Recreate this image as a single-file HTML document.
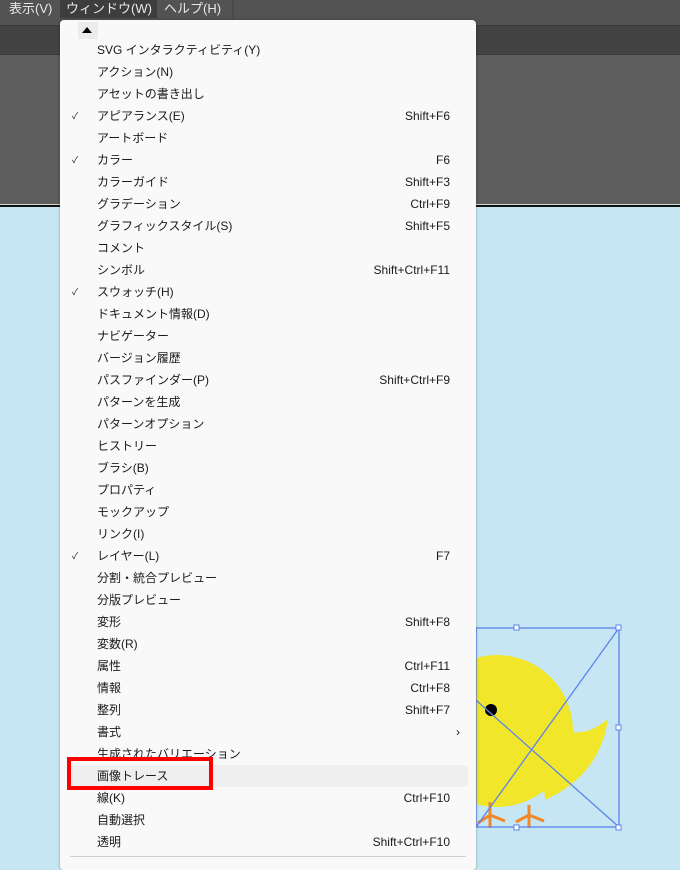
<!DOCTYPE html>
<html><head><meta charset="utf-8"><style>
*{margin:0;padding:0;box-sizing:border-box}
body{width:680px;height:864px;overflow:hidden;position:relative;background:#c5e6f2;font-family:"Liberation Sans","Noto Sans CJK JP",sans-serif;}
.bar{position:absolute;left:0;top:0;width:680px;height:25px;background:#535353;}
.bar span{position:absolute;top:0;font-size:13px;color:#e8e8e8;line-height:17px}
.tb{position:absolute;left:0;top:25px;width:680px;height:30px;background:#434343;border-top:1px solid #3a3a3a;border-bottom:1px solid #3a3a3a}
.ws{position:absolute;left:0;top:55px;width:680px;height:149px;background:#5e5e5e}
.ln{position:absolute;left:0;top:204px;width:680px;height:1px;background:#cfd8cf}
.ln2{position:absolute;left:0;top:205px;width:680px;height:2px;background:#111}
.menu{position:absolute;left:60px;top:20px;width:416px;height:850px;background:#f9f9f9;border-radius:4px;box-shadow:0 0 3px rgba(0,0,0,.3)}
.r{position:absolute;left:0;width:416px;height:22px;font-size:12px;color:#1a1a1a;line-height:22px;margin-top:2px}
.r .t{position:absolute;left:37px}
.r .k{position:absolute;right:26px}
.r .c{position:absolute;left:12px;font-size:9px}
</style></head><body>
<div class="bar"><span style="left:9px">表示(V)</span><div style="position:absolute;left:60px;top:0;width:97px;height:18px;background:#3d3d3d"></div><span style="left:66px">ウィンドウ(W)</span><span style="left:164px">ヘルプ(H)</span><div style="position:absolute;left:232px;top:0;width:2px;height:18px;background:#4a4a4a"></div></div>
<div class="tb"></div><div class="ws"></div><div class="ln"></div><div class="ln2"></div>
<svg style="position:absolute;left:0;top:0" width="680" height="864">
<circle cx="497" cy="731" r="76" fill="#f2e62a"/>
<path d="M565 730 Q585 738 608 719 Q600 775 545 800 L540 740 Z" fill="#f2e62a"/>
<circle cx="491" cy="710" r="6" fill="#000"/>
<g stroke="#f0882a" stroke-width="3" fill="none"><path d="M490 802V828M478 823L490 815L505 821M529 805V828M516 822L529 815L544 821"/></g>
<g stroke="#5b84ee" stroke-width="1.3" fill="none"><rect x="476" y="628" width="143" height="199"/><path d="M476 827L619 628M460 686L619 827"/></g>
<g fill="#fff" stroke="#5b84ee"><rect x="514" y="625" width="5" height="5"/><rect x="616" y="625" width="5" height="5"/><rect x="616" y="725" width="5" height="5"/><rect x="514" y="825" width="5" height="5"/><rect x="616" y="825" width="5" height="5"/></g>
</svg>
<div class="menu">
<div style="position:absolute;left:18px;top:2px;width:20px;height:17px;background:#ececec"></div>
<div style="position:absolute;left:22px;top:7px;width:0;height:0;border-left:5px solid transparent;border-right:5px solid transparent;border-bottom:6px solid #000"></div>
<div style="position:absolute;left:7px;top:745px;width:401px;height:22px;background:#efefef;border-radius:4px"></div>
<div style="position:absolute;left:10px;top:836px;width:396px;height:1px;background:#d0d0d0"></div>
<div class="r" style="top:17px"><span class="t">SVG インタラクティビティ(Y)</span></div>
<div class="r" style="top:39px"><span class="t">アクション(N)</span></div>
<div class="r" style="top:61px"><span class="t">アセットの書き出し</span></div>
<div class="r" style="top:83px"><span class="c">✓</span><span class="t">アピアランス(E)</span><span class="k">Shift+F6</span></div>
<div class="r" style="top:105px"><span class="t">アートボード</span></div>
<div class="r" style="top:127px"><span class="c">✓</span><span class="t">カラー</span><span class="k">F6</span></div>
<div class="r" style="top:149px"><span class="t">カラーガイド</span><span class="k">Shift+F3</span></div>
<div class="r" style="top:171px"><span class="t">グラデーション</span><span class="k">Ctrl+F9</span></div>
<div class="r" style="top:193px"><span class="t">グラフィックスタイル(S)</span><span class="k">Shift+F5</span></div>
<div class="r" style="top:215px"><span class="t">コメント</span></div>
<div class="r" style="top:237px"><span class="t">シンボル</span><span class="k">Shift+Ctrl+F11</span></div>
<div class="r" style="top:259px"><span class="c">✓</span><span class="t">スウォッチ(H)</span></div>
<div class="r" style="top:281px"><span class="t">ドキュメント情報(D)</span></div>
<div class="r" style="top:303px"><span class="t">ナビゲーター</span></div>
<div class="r" style="top:325px"><span class="t">バージョン履歴</span></div>
<div class="r" style="top:347px"><span class="t">パスファインダー(P)</span><span class="k">Shift+Ctrl+F9</span></div>
<div class="r" style="top:369px"><span class="t">パターンを生成</span></div>
<div class="r" style="top:391px"><span class="t">パターンオプション</span></div>
<div class="r" style="top:413px"><span class="t">ヒストリー</span></div>
<div class="r" style="top:435px"><span class="t">ブラシ(B)</span></div>
<div class="r" style="top:457px"><span class="t">プロパティ</span></div>
<div class="r" style="top:479px"><span class="t">モックアップ</span></div>
<div class="r" style="top:501px"><span class="t">リンク(I)</span></div>
<div class="r" style="top:523px"><span class="c">✓</span><span class="t">レイヤー(L)</span><span class="k">F7</span></div>
<div class="r" style="top:545px"><span class="t">分割・統合プレビュー</span></div>
<div class="r" style="top:567px"><span class="t">分版プレビュー</span></div>
<div class="r" style="top:589px"><span class="t">変形</span><span class="k">Shift+F8</span></div>
<div class="r" style="top:611px"><span class="t">変数(R)</span></div>
<div class="r" style="top:633px"><span class="t">属性</span><span class="k">Ctrl+F11</span></div>
<div class="r" style="top:655px"><span class="t">情報</span><span class="k">Ctrl+F8</span></div>
<div class="r" style="top:677px"><span class="t">整列</span><span class="k">Shift+F7</span></div>
<div class="r" style="top:699px"><span class="t">書式</span><span class="k" style="right:16px">›</span></div>
<div class="r" style="top:721px"><span class="t">生成されたバリエーション</span></div>
<div class="r" style="top:743px"><span class="t">画像トレース</span></div>
<div class="r" style="top:765px"><span class="t">線(K)</span><span class="k">Ctrl+F10</span></div>
<div class="r" style="top:787px"><span class="t">自動選択</span></div>
<div class="r" style="top:809px"><span class="t">透明</span><span class="k">Shift+Ctrl+F10</span></div>
</div>
<div style="position:absolute;left:67px;top:757px;width:146px;height:33px;border:4px solid #f00"></div>
</body></html>
